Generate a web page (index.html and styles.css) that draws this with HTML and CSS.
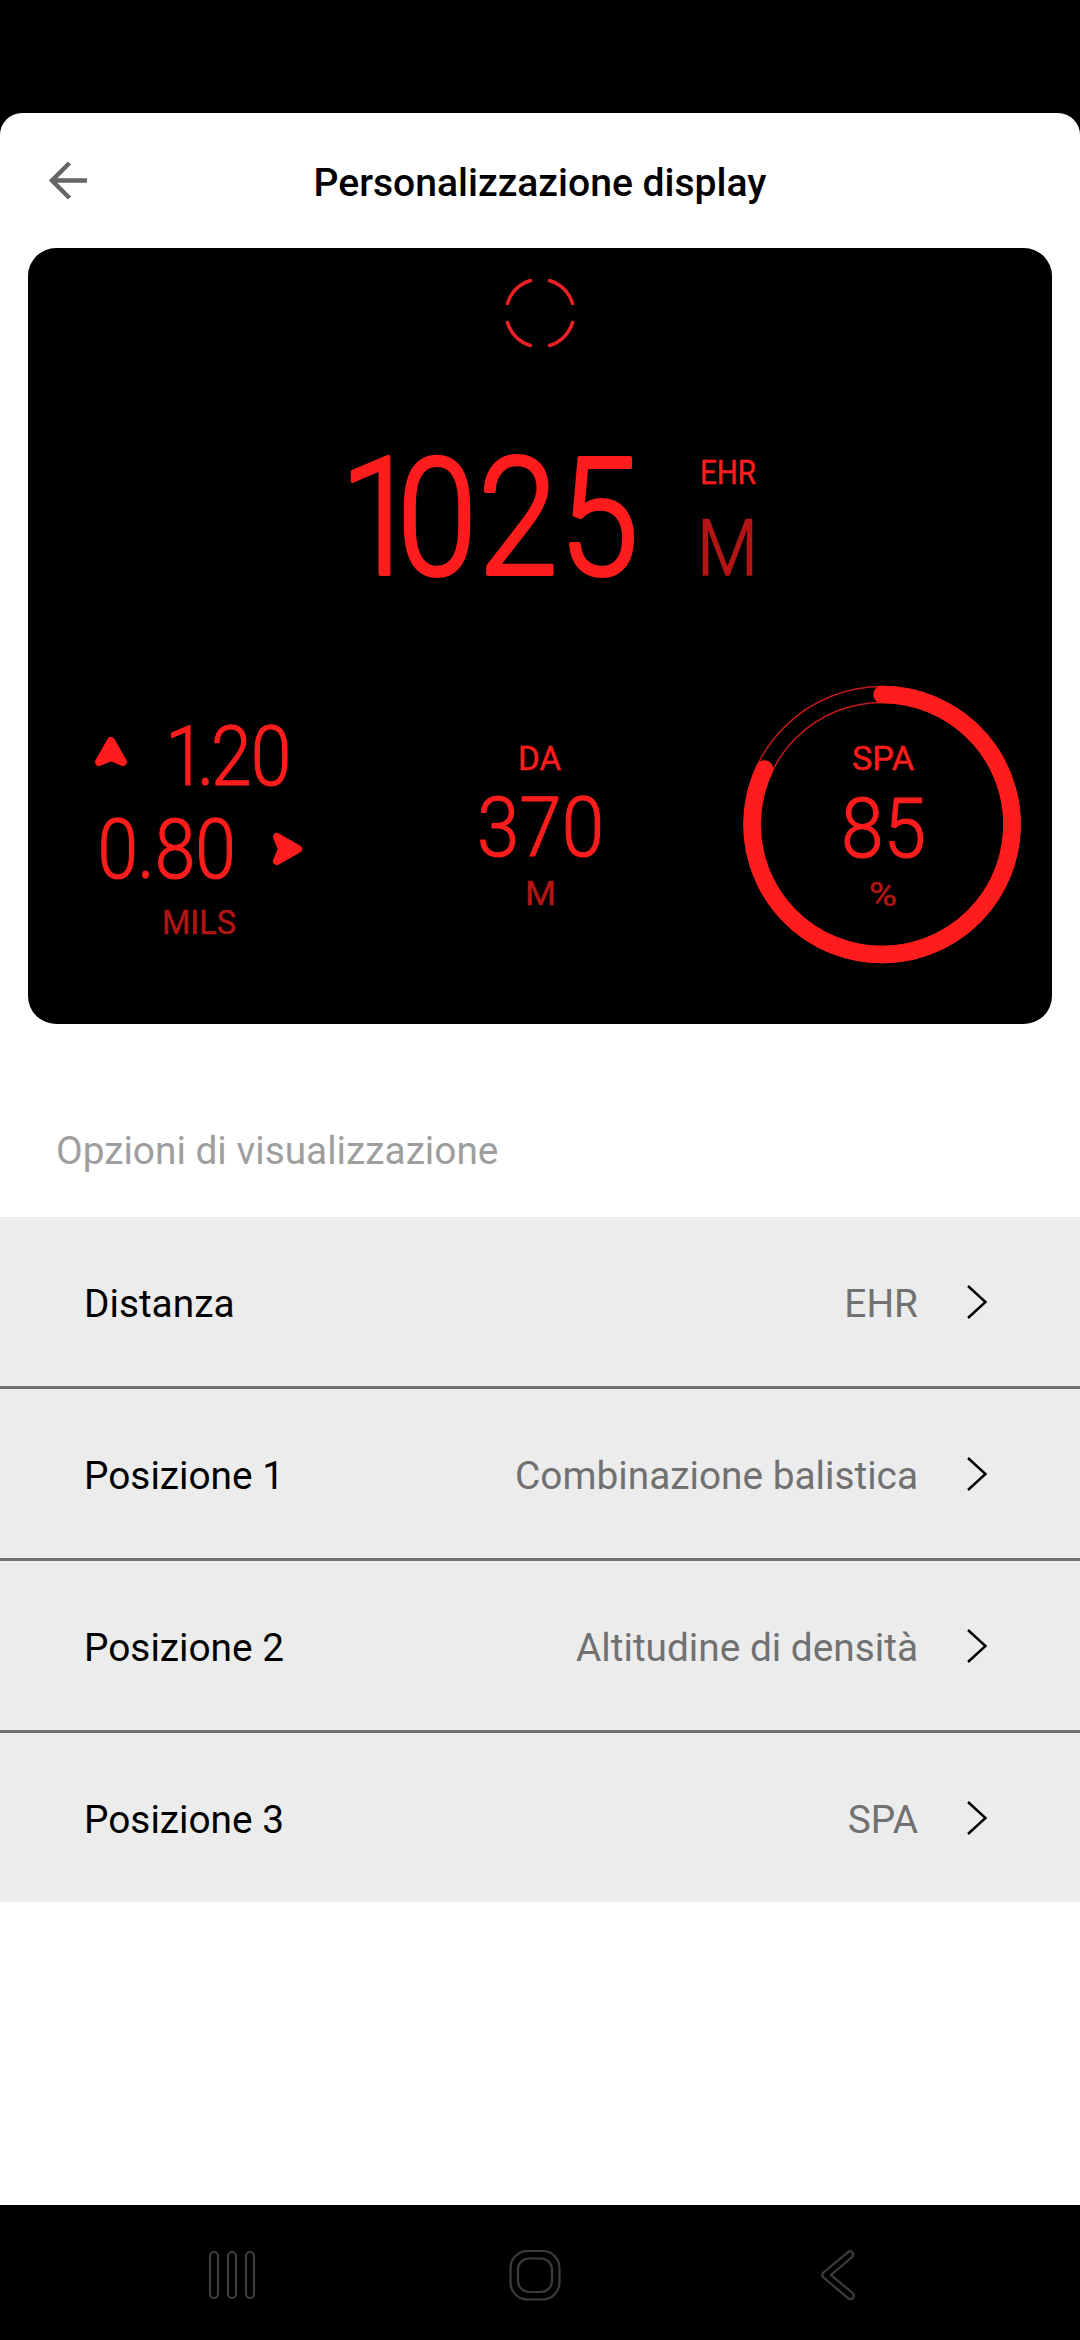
FILE: index.html
```html
<!DOCTYPE html>
<html lang="it">
<head>
  <meta charset="UTF-8">
  <meta name="viewport" content="width=device-width, initial-scale=1.0">
  <title>Personalizzazione display</title>
  <link rel="stylesheet" href="styles.css">
</head>
<body>
  <main class="sheet">
    <header class="topbar">
      <svg class="back" viewBox="0 0 40 40">
        <path d="M39 19.500H5M21.500 2L4 19.500l17.500 17.500" />
      </svg>
      <h1>Personalizzazione display</h1>
    </header>

    <section class="display">
      <svg class="reticle" viewBox="-40 -40 80 80">
        <path d="M-32.500 -9.500A34 34 0 0 1 -9.500 -32.500M9.500 -32.500A34 34 0 0 1 32.500 -9.500M32.500 9.500A34 34 0 0 1 9.500 32.500M-9.500 32.500A34 34 0 0 1 -32.500 9.500" />
      </svg>

      <svg class="distance" viewBox="-30 -30 490 220">
        <text class="huge" transform="scale(.88 1)" x="0 65 157 249" y="134">1025</text>
        <text class="label" x="360" y="44" textLength="56" lengthAdjust="spacingAndGlyphs">EHR</text>
        <text class="dim unit" x="357" y="135" textLength="61" lengthAdjust="spacingAndGlyphs">M</text>
      </svg>

      <div class="readouts">
        <svg class="ballistic" viewBox="0 0 240 290">
          <path class="arrow" d="M31 61L43 82L31 77L19 82Z" />
          <text class="value" transform="scale(.88 1)" x="97 133 149 194" y="105">1.20</text>
          <text class="value" transform="scale(.88 1)" x="20 65 85 131" y="198">0.80</text>
          <path class="arrow" d="M218 169L197 157L202 169L197 181Z" />
          <text class="label dim" x="82" y="254" textLength="74" lengthAdjust="spacingAndGlyphs">MILS</text>
        </svg>

        <svg class="density" viewBox="0 0 160 290">
          <text class="label" x="58" y="90" textLength="43" lengthAdjust="spacingAndGlyphs">DA</text>
          <text class="value" x="17" y="176" textLength="127" lengthAdjust="spacingAndGlyphs">370</text>
          <text class="label dim" x="65" y="225" textLength="31" lengthAdjust="spacingAndGlyphs">M</text>
        </svg>

        <svg class="spa" viewBox="0 0 290 290">
          <circle class="track" cx="145" cy="144.500" r="138" />
          <circle class="track" cx="145" cy="144.500" r="122" />
          <path class="progress" d="M145 14.500A130 130 0 1 1 27.500 89" />
          <text class="label" x="115" y="90" textLength="62" lengthAdjust="spacingAndGlyphs">SPA</text>
          <text class="value" x="104" y="177" textLength="85" lengthAdjust="spacingAndGlyphs">85</text>
          <text class="label dim" x="132" y="226" textLength="28" lengthAdjust="spacingAndGlyphs">%</text>
        </svg>
      </div>
    </section>

    <h2>Opzioni di visualizzazione</h2>

    <ul class="options">
      <li>
        <span class="name">Distanza</span>
        <span class="current">EHR</span>
        <svg class="chevron" viewBox="0 0 20 34"><path d="M1 1l17.500 16L1 33" /></svg>
      </li>
      <li>
        <span class="name">Posizione 1</span>
        <span class="current">Combinazione balistica</span>
        <svg class="chevron" viewBox="0 0 20 34"><path d="M1 1l17.500 16L1 33" /></svg>
      </li>
      <li>
        <span class="name">Posizione 2</span>
        <span class="current">Altitudine di densità</span>
        <svg class="chevron" viewBox="0 0 20 34"><path d="M1 1l17.500 16L1 33" /></svg>
      </li>
      <li>
        <span class="name">Posizione 3</span>
        <span class="current">SPA</span>
        <svg class="chevron" viewBox="0 0 20 34"><path d="M1 1l17.500 16L1 33" /></svg>
      </li>
    </ul>
  </main>

  <nav class="navbar">
    <svg viewBox="0 0 52 52">
      <rect x="3" y="2" width="8" height="46" rx="4" />
      <rect x="21" y="2" width="8" height="46" rx="4" />
      <rect x="39" y="2" width="8" height="46" rx="4" />
    </svg>
    <svg viewBox="0 0 52 52">
      <rect x="1.500" y="1" width="49" height="48.500" rx="17" />
      <rect x="9" y="8.500" width="34" height="33.500" rx="11" />
    </svg>
    <svg viewBox="0 0 52 52">
      <path d="M27 2.200L2.500 22.500Q0 25 2.500 27.500L27.500 48.500Q30 50 32 48Q34 45.500 31.500 43L10 25L31 7Q33 5 31.500 2.700Q29.500 0 27 2.200Z" />
    </svg>
  </nav>
</body>
</html>
```
FILE: styles.css
```css
* {
  box-sizing: border-box;
}
body {
  margin: 0;
  height: 2340px;
  padding-top: 113px;
  background-color: #000;
  font-family: Roboto, sans-serif;
  display: flex;
  flex-direction: column;
}
svg {
  display: block;
  flex: none;
  fill: none;
}
.sheet {
  height: 2092px;
  background-color: #fff;
  border-radius: 22px 22px 0 0;
}
.topbar {
  height: 135px;
  display: grid;
  grid-template-columns: 48px 1fr 48px;
  align-items: center;
  padding: 0 48px;
}
.back {
  width: 40px;
  height: 40px;
  stroke: #666;
  stroke-width: 4.5;
}
h1 {
  margin: 5px 0 0;
  font-size: 39.1px;
  font-weight: 500;
  text-align: center;
}
.display {
  height: 776px;
  margin: 0 28px;
  padding-top: 25px;
  background-color: #000;
  border-radius: 28px;
}
.reticle {
  width: 80px;
  height: 80px;
  margin: 0 auto;
  stroke: #ec2024;
  stroke-width: 3.5;
  stroke-linecap: round;
}
.distance {
  width: 490px;
  height: 220px;
  margin: 57px 0 0 282px;
}
.display text {
  fill: #ff1c1c;
  stroke: #ff1c1c;
  stroke-linejoin: round;
  font-weight: 300;
}
.display .huge {
  font-size: 163px;
  stroke-width: 4;
}
.display .value {
  font-size: 83px;
  stroke-width: 1.2;
}
.display .label {
  font-size: 34px;
  font-weight: 400;
  stroke-width: 0.5;
}
.display .unit {
  font-size: 78px;
  stroke-width: 1.5;
}
.display .dim {
  fill: #b31515;
  stroke: #b31515;
}
.readouts {
  display: flex;
  justify-content: space-between;
  margin-top: 50px;
  padding: 0 25px 0 52px;
}
.ballistic {
  width: 240px;
  height: 290px;
}
.density {
  width: 160px;
  height: 290px;
  margin-left: 23px;
}
.spa {
  width: 290px;
  height: 290px;
}
.arrow {
  fill: #ff1c1c;
  stroke: #ff1c1c;
  stroke-width: 8;
  stroke-linejoin: round;
}
.track {
  stroke: #c41a1a;
  stroke-width: 1.5;
}
.progress {
  stroke: #ff1c1c;
  stroke-width: 17.5;
  stroke-linecap: round;
}
h2 {
  margin: 104px 0 0;
  padding-left: 56px;
  height: 89px;
  line-height: 46px;
  font-size: 38.8px;
  font-weight: 400;
  color: #9e9e9e;
}
.options {
  margin: 0;
  padding: 0;
  list-style: none;
  background-color: #ececec;
}
.options li {
  height: 172px;
  display: flex;
  align-items: center;
  padding: 0 93px 0 84px;
  font-size: 38.8px;
  border-bottom: 3px solid #717171;
}
.options li:last-child {
  height: 169px;
  border-bottom: none;
}
.name {
  flex: 1;
  padding-top: 4px;
}
.current {
  padding-top: 4px;
  color: #717171;
}
.chevron {
  width: 20px;
  height: 34px;
  margin-left: 49px;
  stroke: #000;
  stroke-width: 2.5;
}
.navbar {
  height: 135px;
  display: flex;
  justify-content: space-between;
  padding: 45px 207px 0;
}
.navbar svg {
  width: 52px;
  height: 52px;
  stroke: #3c3c3c;
  stroke-width: 2.2;
}
.navbar svg:nth-child(2) {
  margin-right: 10px;
}
```
